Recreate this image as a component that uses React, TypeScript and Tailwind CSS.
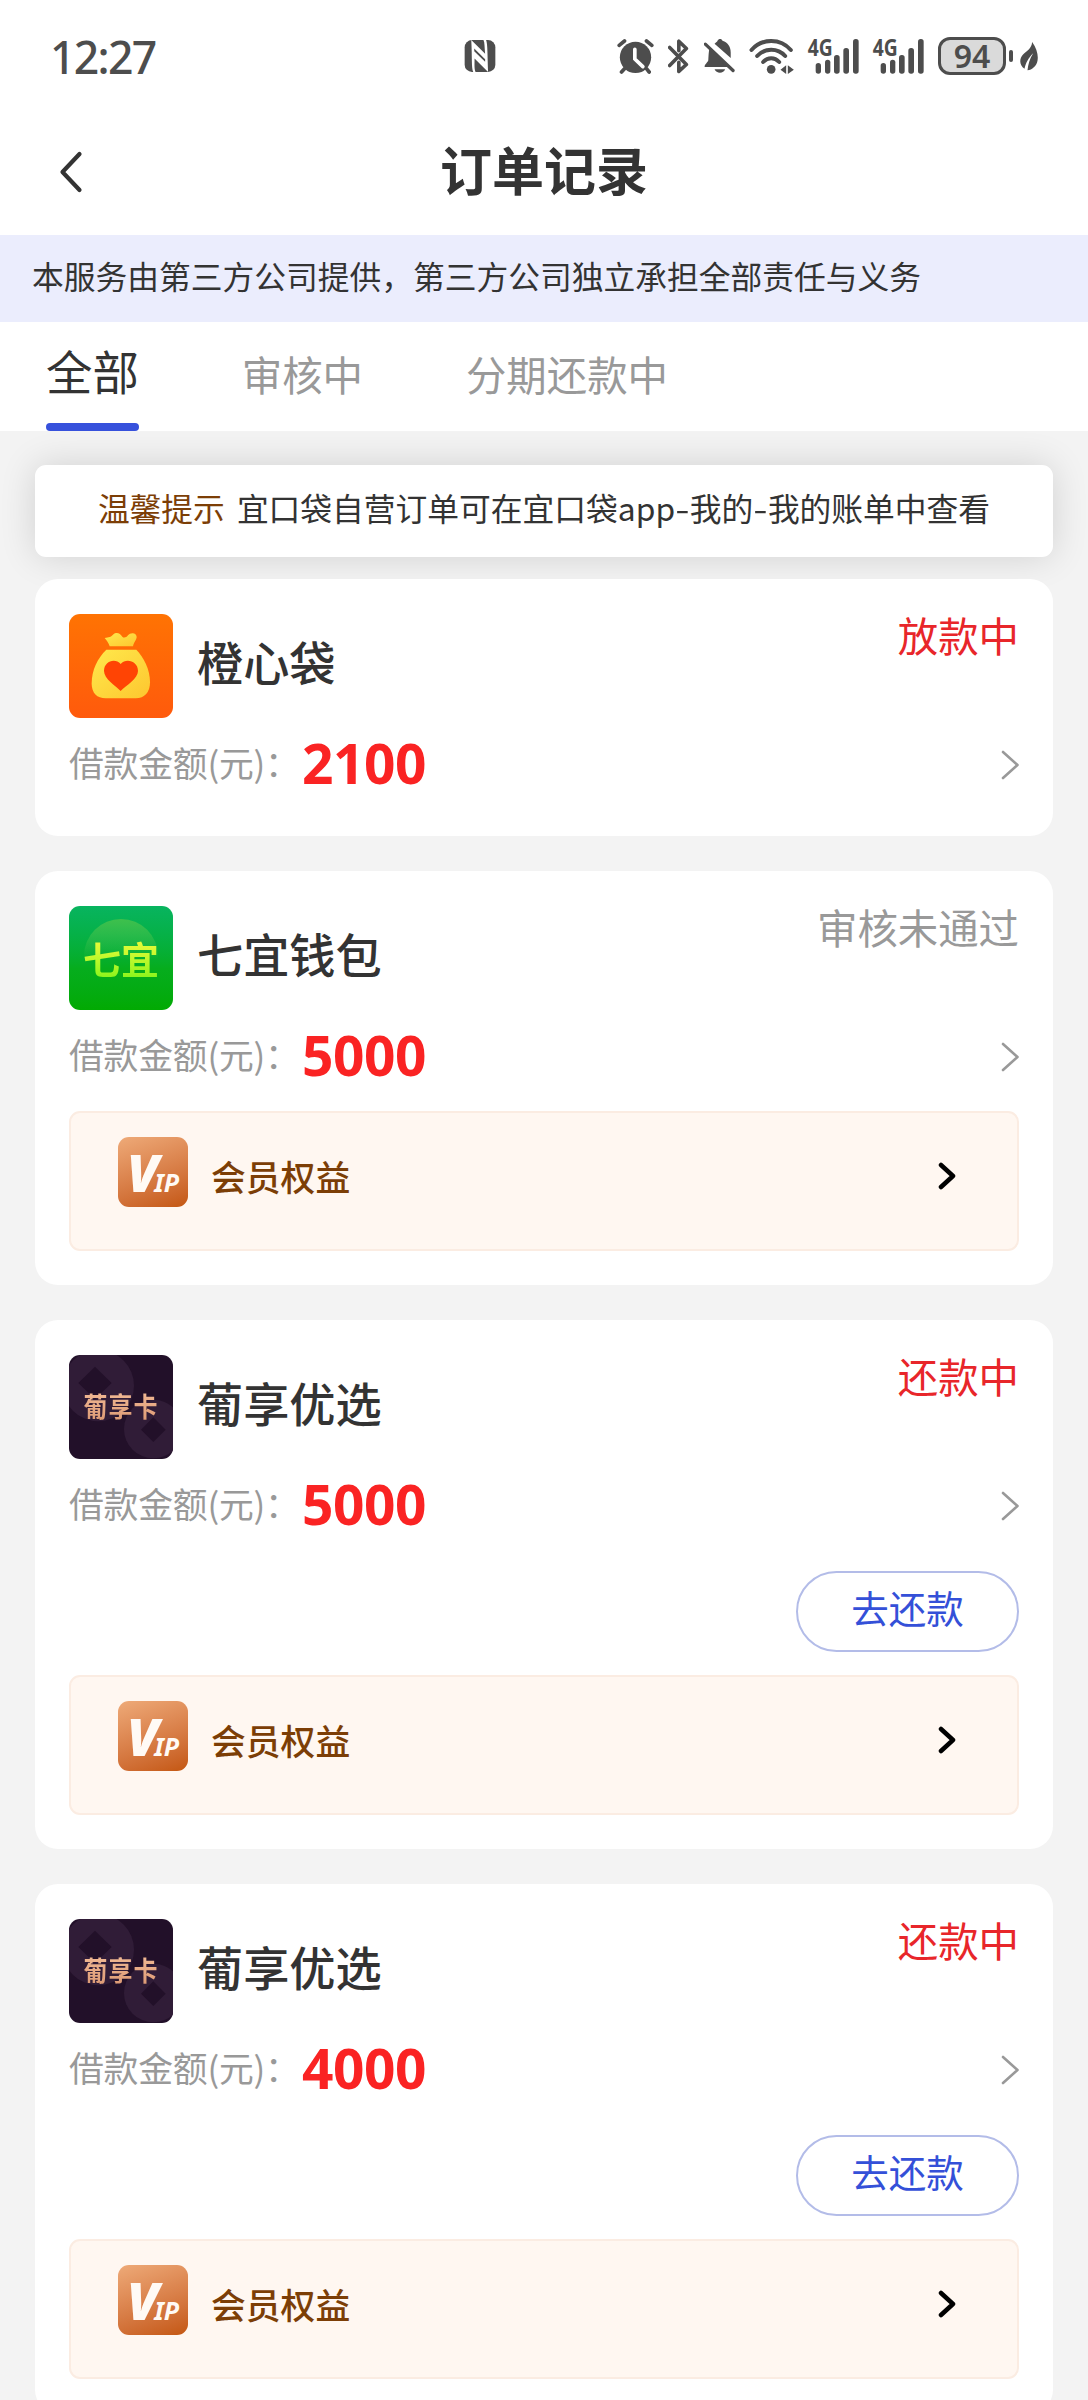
import { useState } from "react";
import clsx from "clsx";

type Order = {
  id: number
  name: string
  logo: 'orange' | 'green' | 'purple'
  amount: number
  status: string
  rejected?: boolean
  repay?: boolean
  vip?: boolean
}

const tabs = ['全部', '审核中', '分期还款中']

const orders: Order[] = [
  { id: 1, name: '橙心袋', logo: 'orange', amount: 2100, status: '放款中' },
  { id: 2, name: '七宜钱包', logo: 'green', amount: 5000, status: '审核未通过', rejected: true, vip: true },
  { id: 3, name: '葡享优选', logo: 'purple', amount: 5000, status: '还款中', repay: true, vip: true },
  { id: 4, name: '葡享优选', logo: 'purple', amount: 4000, status: '还款中', repay: true, vip: true },
]

function Signal() {
  return (
    <svg viewBox="0 0 153 105" className="h-[35px] w-[51px] shrink-0 overflow-visible" fill="#4d4d4d">
      <text x="-1" y="51" textLength="75" lengthAdjust="spacingAndGlyphs" fontSize="68" fontWeight="700" fontFamily="'Noto Sans', sans-serif">4G</text>
      <rect x="23" y="72" width="16" height="32" rx="8" />
      <rect x="51" y="62" width="16" height="42" rx="8" />
      <rect x="78" y="48" width="17" height="56" rx="8" />
      <rect x="106" y="27" width="17" height="77" rx="8" />
      <rect x="135" y="0" width="17" height="104" rx="8" />
    </svg>
  )
}

function StatusBar() {
  return (
    <div className="flex h-[110px] items-center pl-[50px] pr-[50px] pt-[2px] text-[#4d4d4d]">
      <span className="w-[414px] pt-[2px] font-['Noto_Sans'] text-[44.5px] font-medium leading-none tracking-[-1.7px]">12:27</span>
      {/* nfc */}
      <svg viewBox="0 0 93 97" className="h-[32px] w-[32px] shrink-0">
        <rect width="93" height="97" rx="22" fill="#4d4d4d" />
        <path d="M20 0L62 42C60 22 61 8 57 0H65C70 12 69 50 71 97L30 56C30 76 29 88 33 97H26C20 86 23 50 20 0Z" fill="#fff" />
        <path d="M29 26L62 58V66L29 34Z" fill="#4d4d4d" />
      </svg>
      <div className="ml-auto flex items-center">
        <svg viewBox="0 0 110 105" className="h-[35px] w-[37px] shrink-0">
          <g stroke="#4d4d4d" strokeWidth="11" strokeLinecap="round" fill="none">
            <path d="M6 19L22 6M88 6L104 19M22 89L13 99M88 89L96 99" />
          </g>
          <circle cx="55" cy="55" r="47" fill="#4d4d4d" />
          <path d="M53 31V60L77 83" stroke="#fff" strokeWidth="11" strokeLinecap="round" fill="none" />
        </svg>
        <svg viewBox="0 0 64 105" className="ml-[14px] h-[35px] w-[21px] shrink-0" fill="none" stroke="#4d4d4d" strokeWidth="11" strokeLinecap="round" strokeLinejoin="round">
          <path d="M5 25L56 77L33 98V70M5 80L56 28L33 6V35" />
        </svg>
        <svg viewBox="0 0 94 105" className="ml-[15px] h-[35px] w-[31px] shrink-0">
          <path d="M32 14C37 10 40 8 41 5C44 -2 54 -2 56 5C73 11 81 23 81 40V57Z" fill="#4d4d4d" />
          <path d="M17 27C14 37 14 51 13 64C12 70 1 77 2 84H77Z" fill="#4d4d4d" />
          <path d="M32 91H64C60 105 37 105 32 91Z" fill="#4d4d4d" />
          <path d="M4 15L88 95" stroke="#4d4d4d" strokeWidth="10" strokeLinecap="round" />
        </svg>
        <svg viewBox="0 0 134 105" className="ml-[14px] h-[35px] w-[45px] shrink-0" fill="none" stroke="#4d4d4d" strokeWidth="12" strokeLinecap="round">
          <path d="M7 33C38 -3 94 -3 125 33M24 51C46 26 86 26 108 51M42 69C56 54 76 54 90 69" />
          <circle cx="66" cy="91" r="13" fill="#4d4d4d" stroke="none" />
          <path d="M111 79V105L94 92ZM116 79V105L134 92Z" fill="#4d4d4d" stroke="none" />
        </svg>
        <div className="ml-[14px] flex gap-[14px]">
          <Signal />
          <Signal />
        </div>
        <div className="ml-[14px] flex h-[38px] w-[68px] items-center justify-center rounded-[12px] border-[3px] border-[#4d4d4d] bg-[#dadada] font-['Noto_Sans'] text-[32px] font-semibold leading-none">
          94
        </div>
        <div className="ml-[3px] h-[12px] w-[4px] rounded-full bg-[#4d4d4d]" />
        <svg viewBox="0 0 53 87" className="ml-[7px] h-[29px] w-[18px] shrink-0">
          <path d="M36 0C50 20 55 40 52 56C49 72 36 83 22 85C24 67 28 52 39 34C24 49 17 63 13 80C-3 70 -3 50 8 38C20 26 34 21 36 0Z" fill="#4d4d4d" />
        </svg>
      </div>
    </div>
  )
}

function Logo({ type }: { type: Order['logo'] }) {
  if (type === 'orange') {
    return (
      <svg viewBox="0 0 312 312" className="size-[104px] shrink-0 rounded-[11px]">
        <defs>
          <linearGradient id="orangeBg" x1="0" y1="0" x2="0" y2="1">
            <stop offset="0" stopColor="#ff7303" />
            <stop offset="1" stopColor="#ff5a0c" />
          </linearGradient>
          <linearGradient id="bag" x1="0" y1="0" x2="1" y2="1">
            <stop offset="0" stopColor="#ffe94c" />
            <stop offset="1" stopColor="#fdc62f" />
          </linearGradient>
        </defs>
        <rect width="312" height="312" fill="url(#orangeBg)" />
        <path d="M107 72C120 69 125 70 132 62C145 52 153 60 160 68C164 73 172 71 177 64C185 53 204 57 203 70C202 78 195 84 192 97H122C119 87 114 80 107 72Z" fill="url(#bag)" />
        <path d="M112 107H202C224 130 243 165 243 205C243 235 227 253 200 253H110C84 253 68 238 68 208C68 168 86 132 112 107Z" fill="url(#bag)" />
        <path d="M155 231C140 216 105 194 105 171C105 142 138 131 155 150C172 131 207 142 207 171C207 194 172 214 155 231Z" fill="#ff4404" />
      </svg>
    )
  }
  if (type === 'green') {
    return (
      <div className="flex size-[104px] shrink-0 items-start justify-center overflow-hidden rounded-[11px] bg-linear-to-b from-[#08b45f] via-[#06ad1d] via-60% to-[#02aa02] pt-[13px]">
        <div className="flex size-[74px] items-center justify-center rounded-full bg-linear-to-b from-[#3fc04c] to-[#06ad1d]/0 to-55%">
          <span className="shrink-0 bg-linear-to-b from-[#f4fb3c] to-[#8cf51c] bg-clip-text pt-[3px] font-['Noto_Sans_CJK_SC'] text-[38px] font-bold leading-none text-transparent">七宜</span>
        </div>
      </div>
    )
  }
  return (
    <div className="grid size-[104px] shrink-0 place-items-center overflow-hidden rounded-[11px] bg-[#221029]">
      <svg viewBox="0 0 312 312" className="col-start-1 row-start-1 size-[104px]">
        <circle cx="88" cy="92" r="107" fill="#301c37" />
        <path d="M78 35L128 84L78 133L28 84Z" fill="#221029" />
        <circle cx="253" cy="222" r="88" fill="#301c37" />
        <path d="M253 187L290 224L253 261L216 224Z" fill="#221029" />
      </svg>
      <span className="z-10 col-start-1 row-start-1 bg-linear-to-b from-[#f3bd98] to-[#d99570] bg-clip-text pb-[2px] font-['Noto_Sans_CJK_SC'] text-[24px] font-bold leading-[30px] tracking-[1px] text-transparent scale-y-115">葡享卡</span>
    </div>
  )
}

function VipEntry() {
  return (
    <div className="flex h-[140px] items-start rounded-[11px] border-2 border-[#fbece2] bg-[#fff7f1] pl-[47px] pr-[61px] pt-[24px]">
      <div className="flex h-[70px] w-[70px] items-baseline justify-center rounded-[11px] bg-linear-160 from-[#eeaa78] to-[#c4570f] font-['Noto_Sans'] font-black italic leading-[70px] text-[#fffaf5]">
        <span className="text-[52px] tracking-[-5px]">V</span>
        <span className="text-[25px] font-bold">IP</span>
      </div>
      <span className="ml-[23px] mt-[13px] text-[34.8px] font-medium leading-[52px] text-[#7c3e06]">会员权益</span>
      <svg viewBox="0 0 18 28" className="ml-auto mt-[25px] h-[28px] w-[18px]" fill="none" stroke="#000" strokeWidth="4.5" strokeLinecap="round" strokeLinejoin="round">
        <path d="M3 3L15 14L3 25" />
      </svg>
    </div>
  )
}

function OrderCard({ order }: { order: Order }) {
  return (
    <div className={clsx('relative rounded-[23px] bg-white px-[34px] pt-[35px]', order.vip ? 'pb-[34px]' : 'pb-[38px]')}>
      <div className="flex">
        <Logo type={order.logo} />
        <div className="ml-[24px] mt-[13px] text-[46.2px] font-medium leading-[68px]">{order.name}</div>
        <div className={clsx('-mt-[9px] ml-auto text-[40.4px] leading-[60px]', order.rejected ? 'text-[#999]' : 'text-[#e8262a]')}>{order.status}</div>
      </div>
      <div className="mt-[10px] flex h-[70px] items-center">
        <span className="w-[233px] whitespace-nowrap pb-[2px] text-[34.8px] tracking-[-0.2px] text-[#999]">借款金额(元)：</span>
        <span className="pb-[2px] font-['Noto_Sans'] text-[55px] font-bold leading-none tracking-[-0.5px] text-[#fa2323]">{order.amount}</span>
        <svg viewBox="0 0 18 30" className="ml-auto mt-[4px] h-[30px] w-[18px]" fill="none" stroke="#999" strokeWidth="2.6" strokeLinecap="round" strokeLinejoin="round">
          <path d="M2 2L16.500 15L2 28" />
        </svg>
      </div>
      {order.repay && (
        <div className="mt-[32px] flex justify-end">
          <button className="h-[81px] w-[223px] rounded-full border-2 border-[#b3bce8] pb-[8px] text-[37.500px] text-[#3450d8]">去还款</button>
        </div>
      )}
      {order.vip && (
        <div className={order.repay ? 'mt-[23px]' : 'mt-[21px]'}>
          <VipEntry />
        </div>
      )}
    </div>
  )
}

export default function App() {
  const [active, setActive] = useState(0)

  return (
    <div className="h-[2400px] w-[1088px] overflow-hidden bg-[#f3f3f3] font-['Noto_Sans_CJK_SC',sans-serif] text-[#333]">
      <div className="bg-white">
        <StatusBar />
        <div className="flex h-[125px] items-center px-[59px] pb-px">
          <svg viewBox="0 0 24 42" className="h-[42px] w-[24px]" fill="none" stroke="#333" strokeWidth="4.200" strokeLinecap="round" strokeLinejoin="round">
            <path d="M20.500 3L3.500 21L20.500 39" />
          </svg>
          <h1 className="flex-1 pb-[6px] pr-[24px] text-center text-[52px] font-bold leading-[76px]">订单记录</h1>
        </div>
      </div>

      <div className="flex h-[87px] items-center bg-[#ebedfd] pb-[5px] pl-[32px] text-[31.750px]">
        本服务由第三方公司提供，第三方公司独立承担全部责任与义务
      </div>

      <div className="flex h-[109px] gap-[103px] bg-white pl-[46px]">
        {tabs.map((tab, i) => (
          <button
            key={tab}
            onClick={() => setActive(i)}
            className={clsx('flex flex-col justify-between', active === i ? 'text-[46.4px] text-[#333]' : 'text-[40.4px] text-[#999]')}
          >
            <span className={active === i ? 'pt-[13px] leading-[70px]' : 'pt-[17px] leading-[70px]'}>{tab}</span>
            {active === i && <span className="h-[8px] w-full rounded-full bg-[#3751dc]" />}
          </button>
        ))}
      </div>

      <div className="px-[35px] pt-[34px]">
        <div className="flex h-[92px] items-center justify-center rounded-[11px] bg-white pb-[6px] text-[31.750px] shadow-[0_0_36px_rgba(0,0,0,0.14)]">
          <span className="mr-[12px] text-[#7c3e06]">温馨提示</span>
          <span>
            宜口袋自营订单可在宜口袋app<span className="inline-block scale-x-130 px-[1.8px]">-</span>我的<span className="inline-block scale-x-130 px-[1.8px]">-</span>我的账单中查看
          </span>
        </div>
        <div className="mt-[22px] flex flex-col gap-[35px]">
          {orders.map((order) => (
            <OrderCard key={order.id} order={order} />
          ))}
        </div>
      </div>
    </div>
  )
}
